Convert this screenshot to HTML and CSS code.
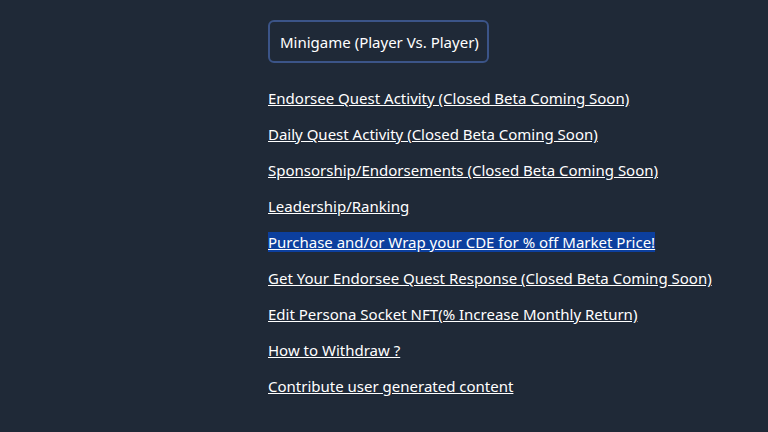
FILE: index.html
```html
<!DOCTYPE html>
<html lang="en">
<head>
    <meta charset="UTF-8">
    <meta name="viewport" content="width=device-width, initial-scale=1.0">
    <title>Menu</title>
    <link rel="stylesheet" href="styles.css">
</head>
<body>
    <div id="menu">
        <button class="mode-button">Minigame (Player Vs. Player)</button>
        <ul class="menu-links">
            <li><a href="#">Endorsee Quest Activity (Closed Beta Coming Soon)</a></li>
            <li><a href="#">Daily Quest Activity (Closed Beta Coming Soon)</a></li>
            <li><a href="#">Sponsorship/Endorsements (Closed Beta Coming Soon)</a></li>
            <li><a href="#">Leadership/Ranking</a></li>
            <li><a href="#" class="selected">Purchase and/or Wrap your CDE for % off Market Price!</a></li>
            <li><a href="#">Get Your Endorsee Quest Response (Closed Beta Coming Soon)</a></li>
            <li><a href="#">Edit Persona Socket NFT(% Increase Monthly Return)</a></li>
            <li><a href="#">How to Withdraw ?</a></li>
            <li><a href="#">Contribute user generated content</a></li>
        </ul>
    </div>
</body>
</html>
```

FILE: styles.css
```css
body {
    margin: 0;
    background-color: #1f2937;
    color: #ffffff;
    font-family: "Noto Sans", sans-serif;
    font-size: 15px;
}
#menu {
    padding: 20px 0 0 268px;
}
.mode-button {
    font-family: inherit;
    font-size: 15px;
    color: #ffffff;
    background: transparent;
    border: 2px solid #3b5488;
    border-radius: 6px;
    height: 43px;
    padding: 0 8px 0 10px;
}
.menu-links {
    list-style: none;
    margin: 24px 0 0 0;
    padding: 0;
    display: flex;
    flex-direction: column;
    gap: 14px;
}
.menu-links li {
    line-height: 22px;
}
.menu-links a {
    color: #ffffff;
}
.menu-links a.selected {
    background-color: #0c3f9e;
}
```
